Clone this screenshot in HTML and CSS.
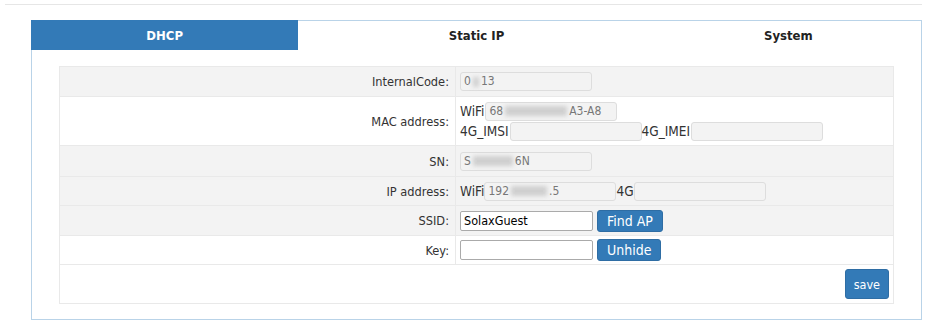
FILE: index.html
```html
<!DOCTYPE html>
<html>
<head>
    <title>Network Settings</title>
    <link rel="stylesheet" href="styles.css">
</head>
<body>
    <div class="topline"></div>
    <div class="panel">
        <!-- Tabs -->
        <div class="tabs">
            <div class="tab active">DHCP</div>
            <div class="tab wide">Static IP</div>
            <div class="tab">System</div>
        </div>

        <table class="form">
            <tr class="gray r30">
                <td class="label">InternalCode:</td>
                <td class="value"><span class="field ro">0<span class="blur b1"></span>13</span></td>
            </tr>
            <tr class="r49">
                <td class="label">MAC address:</td>
                <td class="value">
                    <div class="line">WiFi<span class="field ro">68<span class="blur b2"></span>A3-A8</span></div>
                    <div class="line">4G_IMSI<span class="field ro"></span>4G_IMEI<span class="field ro"></span></div>
                </td>
            </tr>
            <tr class="gray r31">
                <td class="label">SN:</td>
                <td class="value"><span class="field ro">S<span class="blur b3"></span>6N</span></td>
            </tr>
            <tr class="gray r29">
                <td class="label">IP address:</td>
                <td class="value">WiFi<span class="field ro">192<span class="blur b4"></span>.5</span>4G<span class="field ro"></span></td>
            </tr>
            <tr class="gray r30">
                <td class="label">SSID:</td>
                <td class="value"><input type="text" class="edit" value="SolaxGuest"><button class="btn">Find AP</button></td>
            </tr>
            <tr class="r29">
                <td class="label">Key:</td>
                <td class="value"><input type="password" class="edit"><button class="btn">Unhide</button></td>
            </tr>
            <tr class="r39">
                <td colspan="2" class="actions"><button class="btn save">save</button></td>
            </tr>
        </table>
    </div>
</body>
</html>
```

FILE: styles.css
```css
body { margin: 0; font-family: "DejaVu Sans Condensed", "DejaVu Sans", sans-serif; font-size: 12.7px; color: #333; background: #fff; }
.topline { height: 1px; background: #e6e6e6; margin: 4px 5px 0 5px; }
.panel { width: 889px; margin: 15px 0 0 31px; border: 1px solid #b9d3e8; padding-bottom: 15px; }
.tabs { display: flex; height: 30px; margin: -1px -1px 0 -1px; }
.tab { width: 30%; font-weight: bold; font-size: 13px; line-height: 31px; text-align: center; color: #222; }
.tab.wide { width: 40%; }
.tab.active { background: #337ab7; color: #fff; }
.form { margin: 16px 0 0 27px; width: 835px; border-collapse: collapse; border: 1px solid #e6e6e6; }
.form td { border: 1px solid #e9e9e9; padding: 0; }
.form tr.gray { background: #f3f3f3; }
.r29 td { height: 28px; }
.r30 td { height: 29px; }
.r31 td { height: 30px; }
.r39 td { height: 38px; }
.r49 td { height: 48px; }
.label { width: 389px; text-align: right; padding-right: 6px !important; }
.value { padding: 0 0 0 4px !important; font-size: 13.5px; }
.line { display: flex; align-items: center; height: 20px; }
.value, .line { white-space: nowrap; }
.field { display: inline-block; vertical-align: middle; box-sizing: border-box; width: 132px; height: 19px; line-height: 17px; border: 1px solid #ddd; border-radius: 3px; padding: 0 3px; font-size: 12px; color: #777; background: #f3f3f3; }
.line .field { margin-left: 1px; }
.blur { display: inline-block; vertical-align: middle; height: 10px; background: #cfcfcf; filter: blur(2px); margin: 0 2px; }
.b1 { width: 6px; }
.b2 { width: 62px; }
.b3 { width: 40px; }
.b4 { width: 36px; }
.edit { box-sizing: border-box; vertical-align: middle; width: 133px; height: 20px; margin: 0; padding: 0 3px; border: 1px solid #aaa; border-radius: 2px; font-family: inherit; font-size: 12.5px; color: #000; }
.btn { vertical-align: middle; margin: 0 0 0 4px; padding: 0 9px; height: 22px; background: #337ab7; color: #fff; border: 1px solid #2e6da4; border-radius: 3px; font-family: inherit; font-size: 14px; cursor: pointer; }
.actions { text-align: right; padding: 0 4px 0 0 !important; }
.save { height: 30px; padding: 0 8px; font-size: 12.5px; }
```
